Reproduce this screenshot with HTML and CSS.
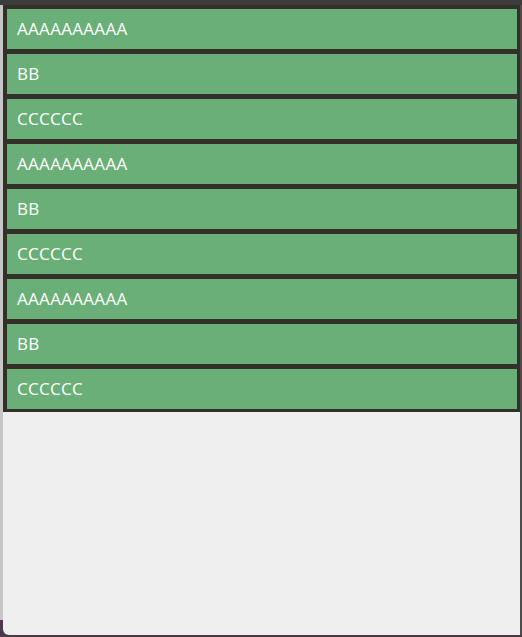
FILE: index.html
```html
<!DOCTYPE html>
<html>
<head>
<meta charset="utf-8">
<link rel="stylesheet" href="styles.css">
</head>
<body>
<div class="window">
  <div class="edge-left"></div>
  <div class="panel">
    <ul class="list">
      <li class="item">AAAAAAAAAA</li>
      <li class="item">BB</li>
      <li class="item">CCCCCC</li>
      <li class="item">AAAAAAAAAA</li>
      <li class="item">BB</li>
      <li class="item">CCCCCC</li>
      <li class="item">AAAAAAAAAA</li>
      <li class="item">BB</li>
      <li class="item">CCCCCC</li>
    </ul>
  </div>
  <div class="edge-right"></div>
</div>
</body>
</html>
```
FILE: styles.css
```css
html, body {
  margin: 0;
  padding: 0;
}
body {
  width: 522px;
  height: 637px;
  overflow: hidden;
  background: linear-gradient(#3c3c3c 0, #3c3c3c 630px, #4a3a48 630px);
  font-family: "Open Sans", "Noto Sans", sans-serif;
}
.window {
  display: flex;
  height: 630px;
  padding-top: 5px;
}
.edge-left {
  width: 3px;
  background: linear-gradient(#c6c6c6 0, #c6c6c6 615px, #4b3a4b 615px);
}
.panel {
  flex: 1;
  background: #efefef;
  border-bottom-left-radius: 6px;
}
.edge-right {
  width: 2px;
  background: #4c4c4c;
}
.list {
  list-style: none;
  margin: 0;
  padding: 4px 3px 3px 4px;
  background: #33302a;
  display: flex;
  flex-direction: column;
  gap: 5px;
}
.item {
  box-sizing: border-box;
  height: 40px;
  background: #6aaf77;
  color: #ffffff;
  font-size: 17px;
  letter-spacing: 0.3px;
  display: flex;
  align-items: center;
  padding: 0 0 2px 10px;
}
```
